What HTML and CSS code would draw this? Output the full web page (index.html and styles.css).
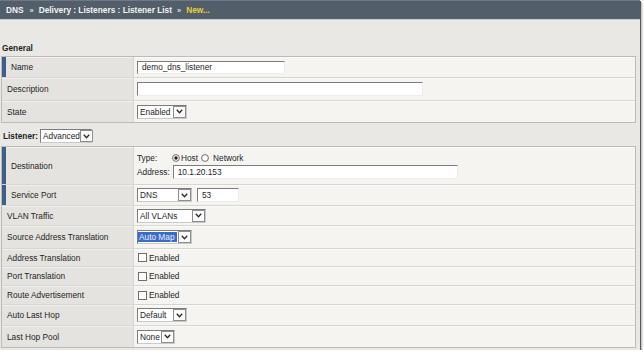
FILE: index.html
```html
<!DOCTYPE html>
<html>
<head>
<meta charset="utf-8">
<link rel="stylesheet" href="styles.css">
</head>
<body>
<div class="frame">
  <div class="crumbs">
    <span>DNS</span><span class="sep">»</span><span>Delivery : Listeners : Listener List</span><span class="sep">»</span><span class="new">New...</span>
  </div>

  <div class="section-title">General</div>
  <div class="tbl tbl-general">
    <div class="lbl req">Name</div>
    <div class="val"><span class="field f-name">demo_dns_listener</span></div>
    <div class="lbl">Description</div>
    <div class="val"><span class="field f-desc"></span></div>
    <div class="lbl">State</div>
    <div class="val">
      <span class="sel s-state"><span class="txt">Enabled</span><span class="arr"><svg width="7" height="5" viewBox="0 0 7 5"><path d="M0.8 0.8 L3.5 3.8 L6.2 0.8" fill="none" stroke="#2a2a2a" stroke-width="1.3"/></svg></span></span>
    </div>
  </div>

  <div class="listener-line">
    <span class="listener-label">Listener:</span>
    <span class="sel s-adv"><span class="txt">Advanced</span><span class="arr"><svg width="7" height="5" viewBox="0 0 7 5"><path d="M0.8 0.8 L3.5 3.8 L6.2 0.8" fill="none" stroke="#2a2a2a" stroke-width="1.3"/></svg></span></span>
  </div>

  <div class="tbl tbl-listener">
    <div class="lbl req">Destination</div>
    <div class="val val-dest">
      <div class="type-line">
        <span class="type-label">Type:</span>
        <svg class="radio" width="8" height="8" viewBox="0 0 8 8"><circle cx="4" cy="4" r="3.4" fill="#fff" stroke="#5a5a5a" stroke-width="0.9"/><circle cx="4" cy="4" r="1.7" fill="#1e1e1e"/></svg>
        <span class="opt-host">Host</span>
        <svg class="radio radio-net" width="8" height="8" viewBox="0 0 8 8"><circle cx="4" cy="4" r="3.4" fill="#fff" stroke="#5a5a5a" stroke-width="0.9"/></svg>
        <span class="opt-net">Network</span>
      </div>
      <div class="addr-line">
        <span>Address:</span>
        <span class="field f-addr">10.1.20.153</span>
      </div>
    </div>

    <div class="lbl req">Service Port</div>
    <div class="val">
      <span class="sel s-dns"><span class="txt">DNS</span><span class="arr"><svg width="7" height="5" viewBox="0 0 7 5"><path d="M0.8 0.8 L3.5 3.8 L6.2 0.8" fill="none" stroke="#2a2a2a" stroke-width="1.3"/></svg></span></span>
      <span class="field f-port">53</span>
    </div>

    <div class="lbl">VLAN Traffic</div>
    <div class="val">
      <span class="sel s-vlan"><span class="txt">All VLANs</span><span class="arr"><svg width="7" height="5" viewBox="0 0 7 5"><path d="M0.8 0.8 L3.5 3.8 L6.2 0.8" fill="none" stroke="#2a2a2a" stroke-width="1.3"/></svg></span></span>
    </div>

    <div class="lbl">Source Address Translation</div>
    <div class="val">
      <span class="sel s-auto"><span class="txt hl">Auto Map</span><span class="arr"><svg width="7" height="5" viewBox="0 0 7 5"><path d="M0.8 0.8 L3.5 3.8 L6.2 0.8" fill="none" stroke="#2a2a2a" stroke-width="1.3"/></svg></span></span>
    </div>

    <div class="lbl">Address Translation</div>
    <div class="val"><span class="check"></span><span class="check-label">Enabled</span></div>

    <div class="lbl">Port Translation</div>
    <div class="val"><span class="check"></span><span class="check-label">Enabled</span></div>

    <div class="lbl">Route Advertisement</div>
    <div class="val"><span class="check"></span><span class="check-label">Enabled</span></div>

    <div class="lbl">Auto Last Hop</div>
    <div class="val">
      <span class="sel s-default"><span class="txt">Default</span><span class="arr"><svg width="7" height="5" viewBox="0 0 7 5"><path d="M0.8 0.8 L3.5 3.8 L6.2 0.8" fill="none" stroke="#2a2a2a" stroke-width="1.3"/></svg></span></span>
    </div>

    <div class="lbl">Last Hop Pool</div>
    <div class="val">
      <span class="sel s-none"><span class="txt">None</span><span class="arr"><svg width="7" height="5" viewBox="0 0 7 5"><path d="M0.8 0.8 L3.5 3.8 L6.2 0.8" fill="none" stroke="#2a2a2a" stroke-width="1.3"/></svg></span></span>
    </div>
  </div>
</div>
</body>
</html>
```

FILE: styles.css
```css
* { box-sizing: border-box; }
html, body { margin: 0; padding: 0; background: #ffffff; }
body {
  font-family: "Liberation Sans", Arial, sans-serif;
  font-size: 8.3px;
  color: #1e1e1e;
}
.frame {
  width: 640px;
  height: 350px;
  background: #e9e8e4;
  box-shadow: 1px 1px 0 #555a5f, 2px 2px 2px rgba(0, 0, 0, 0.35);
  overflow: hidden;
}
.crumbs {
  height: 20px;
  background: #525e6a;
  border-top: 1px solid #6f7985;
  border-bottom: 1px solid #c8cdd2;
  display: flex;
  align-items: center;
  padding-left: 6px;
  font-weight: bold;
  color: #f3f4f5;
  white-space: nowrap;
}
.crumbs .sep { margin: 0 5px 0 6px; color: #d9dde1; font-size: 7.5px; }
.crumbs .sep + span + .sep { margin-left: 5px; }
.crumbs .new { color: #e8cf3c; }

.section-title {
  margin-top: 23px;
  height: 10px;
  line-height: 10px;
  padding-left: 2px;
  font-weight: bold;
}

.tbl {
  display: grid;
  grid-template-columns: 131px 1fr;
  gap: 1px;
  background: #d6d5d1;
  border: 1px solid #bcbbb7;
  margin: 3px 4px 0 1px;
}
.tbl-general { grid-template-rows: 20px 22px 21px; }
.tbl-listener { grid-template-rows: 37px 20px 19px 22px 17px 18px 18px 20px 21px; }

.lbl {
  background: #e4e3df;
  display: flex;
  align-items: center;
  padding-left: 5px;
  box-shadow: inset 0 1px 0 #f1f0ed;
  white-space: nowrap;
}
.lbl.req { border-left: 4px solid #3d5f8a; }
.val {
  background: #f5f4f1;
  display: flex;
  align-items: center;
  padding-left: 3px;
  box-shadow: inset 0 1px 0 #fbfaf8;
  white-space: nowrap;
}

.field {
  display: flex;
  align-items: center;
  height: 14px;
  background: #ffffff;
  border: 1px solid;
  border-color: #7c7c7c #ececec #ececec #7c7c7c;
  padding-left: 4px;
}
.f-name { width: 148px; height: 13px; }
.f-desc { width: 286px; }
.f-addr { width: 285px; margin-left: 3px; }
.f-port { width: 42px; margin-left: 5px; }

.sel {
  display: inline-flex;
  align-items: center;
  height: 14px;
  background: #ffffff;
  border: 1px solid;
  border-color: #7c7c7c #c9c9c9 #c9c9c9 #7c7c7c;
}
.sel .txt { flex: 1; padding-left: 2px; overflow: visible; }
.sel .txt.hl {
  background: #3b6bc6;
  color: #eef2fb;
  margin: 1px 1px 1px 0;
  height: 10px;
  line-height: 10px;
  padding-left: 1px;
}
.sel .arr {
  flex: none;
  width: 13px;
  height: 12px;
  border: 1px solid #8e8e8e;
  background: #fafafa;
  display: flex;
  align-items: center;
  justify-content: center;
}
.s-state { width: 50px; }
.s-adv { width: 52px; }
.s-dns { width: 55px; }
.s-vlan { width: 69px; }
.s-auto { width: 55px; }
.s-default { width: 50px; }
.s-none { width: 38px; }

.listener-line {
  margin-top: 6px;
  height: 14px;
  display: flex;
  align-items: center;
  padding-left: 3px;
}
.listener-label { font-weight: bold; margin-right: 2px; }

.val-dest {
  flex-direction: column;
  align-items: flex-start;
  justify-content: flex-start;
  padding-top: 5px;
}
.type-line { height: 11px; display: flex; align-items: center; }
.type-label { width: 35px; }
.opt-host { margin-left: 1px; }
.radio-net { margin-left: 3px; }
.opt-net { margin-left: 4px; }
.addr-line { margin-top: 2px; display: flex; align-items: center; }

.check {
  width: 9px;
  height: 9px;
  margin-left: 1px;
  background: #ffffff;
  border: 1px solid #6e6e6e;
}
.check-label { margin-left: 2px; }
```
